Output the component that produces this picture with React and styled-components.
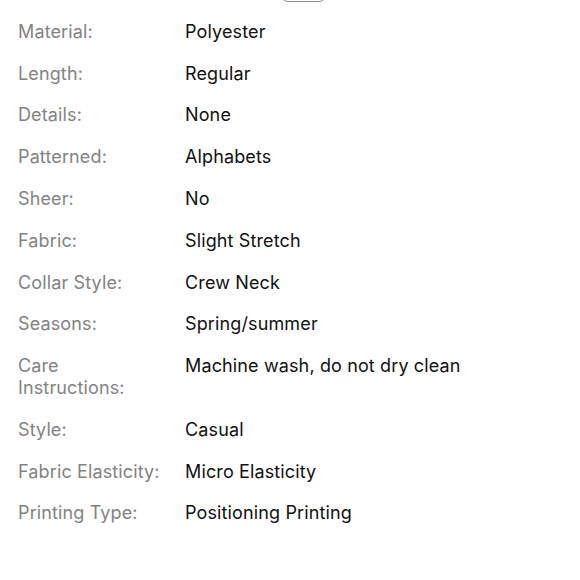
import React from 'react'
import styled, { createGlobalStyle } from 'styled-components'

const GlobalStyle = createGlobalStyle`
    body {
        margin: 0;
        background: #fff;
        font-family: Inter, "Liberation Sans", sans-serif;
    }
`;

const Page = styled.div`
    width: 580px;
    height: 580px;
    overflow: hidden;
    background: #fff;
`;

const TopTab = styled.div`
    width: 45px;
    height: 20px;
    margin: -18px auto 0;
    padding-left: 26px;
    box-sizing: content-box;
`;

const TabShape = styled.div`
    width: 45px;
    height: 20px;
    border: 1.5px solid #8a8a8a;
    border-radius: 7px;
    box-sizing: border-box;
`;

const List = styled.div`
    padding: 9px 18px 0;
`;

const Row = styled.div`
    display: grid;
    grid-template-columns: 167px 1fr;
    padding: 9.9px 0;
    font-size: 18px;
    line-height: 22px;
    letter-spacing: 0.13px;
`;

const Label = styled.div`
    color: #838383;
    padding-right: 20px;
`;

const Value = styled.div`
    color: #111;
`;

const specs = [
    ['Material:', 'Polyester'],
    ['Length:', 'Regular'],
    ['Details:', 'None'],
    ['Patterned:', 'Alphabets'],
    ['Sheer:', 'No'],
    ['Fabric:', 'Slight Stretch'],
    ['Collar Style:', 'Crew Neck'],
    ['Seasons:', 'Spring/summer'],
    ['Care Instructions:', 'Machine wash, do not dry clean'],
    ['Style:', 'Casual'],
    ['Fabric Elasticity:', 'Micro Elasticity'],
    ['Printing Type:', 'Positioning Printing'],
];

export default function App() {
    return (
        <Page>
            <GlobalStyle />
            <TopTab>
                <TabShape />
            </TopTab>
            <List>
                {specs.map(([label, value]) => (
                    <Row key={label}>
                        <Label>{label}</Label>
                        <Value>{value}</Value>
                    </Row>
                ))}
            </List>
        </Page>
    )
}
